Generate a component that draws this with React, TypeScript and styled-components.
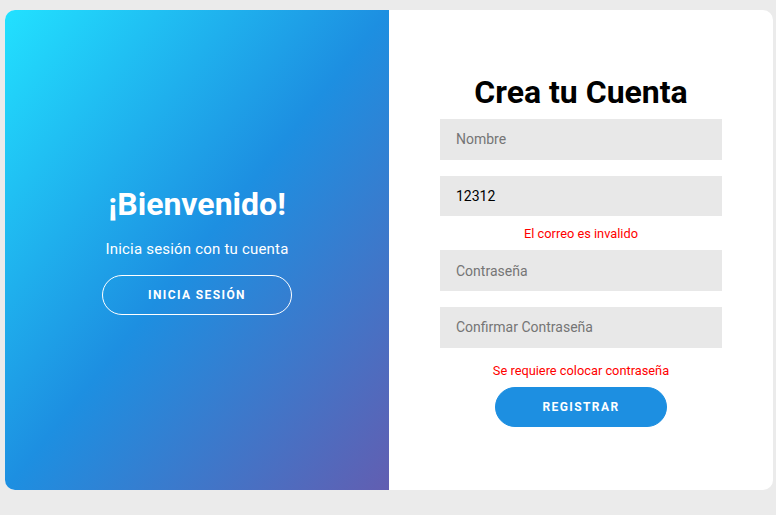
import React from "react";
import styled, { createGlobalStyle } from "styled-components";

const Global = createGlobalStyle`
  html, body { margin: 0; padding: 0; background: #ebebeb; }
  body { font-family: Roboto, "Liberation Sans", sans-serif; }
  * { box-sizing: border-box; }
`;

const Page = styled.div`
  padding: 10px 3px 0 5px;
  width: 776px;
  height: 515px;
`;

const Card = styled.div`
  display: grid;
  grid-template-columns: 384px 384px;
  width: 768px;
  height: 480px;
  border-radius: 10px;
  overflow: hidden;
  background: #fff;
`;

const Welcome = styled.section`
  display: flex;
  flex-direction: column;
  align-items: center;
  justify-content: center;
  color: #fff;
  background: linear-gradient(to right bottom, #22e1ff 0%, #1d8fe1 50%, #625eb1 100%);
  padding-top: 0;
`;

const Title = styled.h1<{ $dark?: boolean }>`
  margin: 0;
  font-size: 32px;
  font-weight: 700;
  line-height: 38px;
  color: ${(p) => (p.$dark ? "#000" : "#fff")};
`;

const Sub = styled.p`
  margin: 17px 0 17px;
  font-size: 15px;
  letter-spacing: 0.2px;
  line-height: 18px;
`;

const Button = styled.button<{ $ghost?: boolean; $w: number }>`
  width: ${(p) => p.$w}px;
  height: 40px;
  border-radius: 20px;
  border: 1px solid ${(p) => (p.$ghost ? "#fff" : "#1d8fe1")};
  background: ${(p) => (p.$ghost ? "transparent" : "#1d8fe1")};
  color: #fff;
  font-family: Roboto, "Liberation Sans", sans-serif;
  font-size: 12px;
  font-weight: 700;
  letter-spacing: 1.4px;
  text-transform: uppercase;
  padding: 0;
`;

const FormPanel = styled.section`
  display: flex;
  flex-direction: column;
  align-items: center;
  padding-top: 63px;
`;

const Field = styled.input`
  width: 282px;
  height: 40.7px;
  border: none;
  background: #e8e8e8;
  padding: 0 16px;
  font-family: Roboto, "Liberation Sans", sans-serif;
  font-size: 14px;
  color: #000;
  margin-top: 16px;
  outline: none;
  &::placeholder { color: #757575; }
`;

const FirstField = styled(Field)`
  margin-top: 8px;
`;

const ErrorText = styled.div<{ $top: number; $bottom: number }>`
  color: #ff0000;
  font-size: 12.8px;
  line-height: 16px;
  margin: ${(p) => p.$top}px 0 ${(p) => p.$bottom}px;
`;

const AfterError = styled(Field)`
  margin-top: 0;
`;

export default function App() {
  return (
    <>
      <Global />
      <Page>
        <Card>
          <Welcome>
            <Title>¡Bienvenido!</Title>
            <Sub>Inicia sesión con tu cuenta</Sub>
            <Button $ghost $w={190}>Inicia sesión</Button>
          </Welcome>
          <FormPanel>
            <Title $dark>Crea tu Cuenta</Title>
            <FirstField placeholder="Nombre" />
            <Field defaultValue="12312" />
            <ErrorText $top={10} $bottom={8}>El correo es invalido</ErrorText>
            <AfterError placeholder="Contraseña" />
            <Field placeholder="Confirmar Contraseña" />
            <ErrorText $top={15} $bottom={8}>Se requiere colocar contraseña</ErrorText>
            <Button $w={172}>Registrar</Button>
          </FormPanel>
        </Card>
      </Page>
    </>
  );
}
